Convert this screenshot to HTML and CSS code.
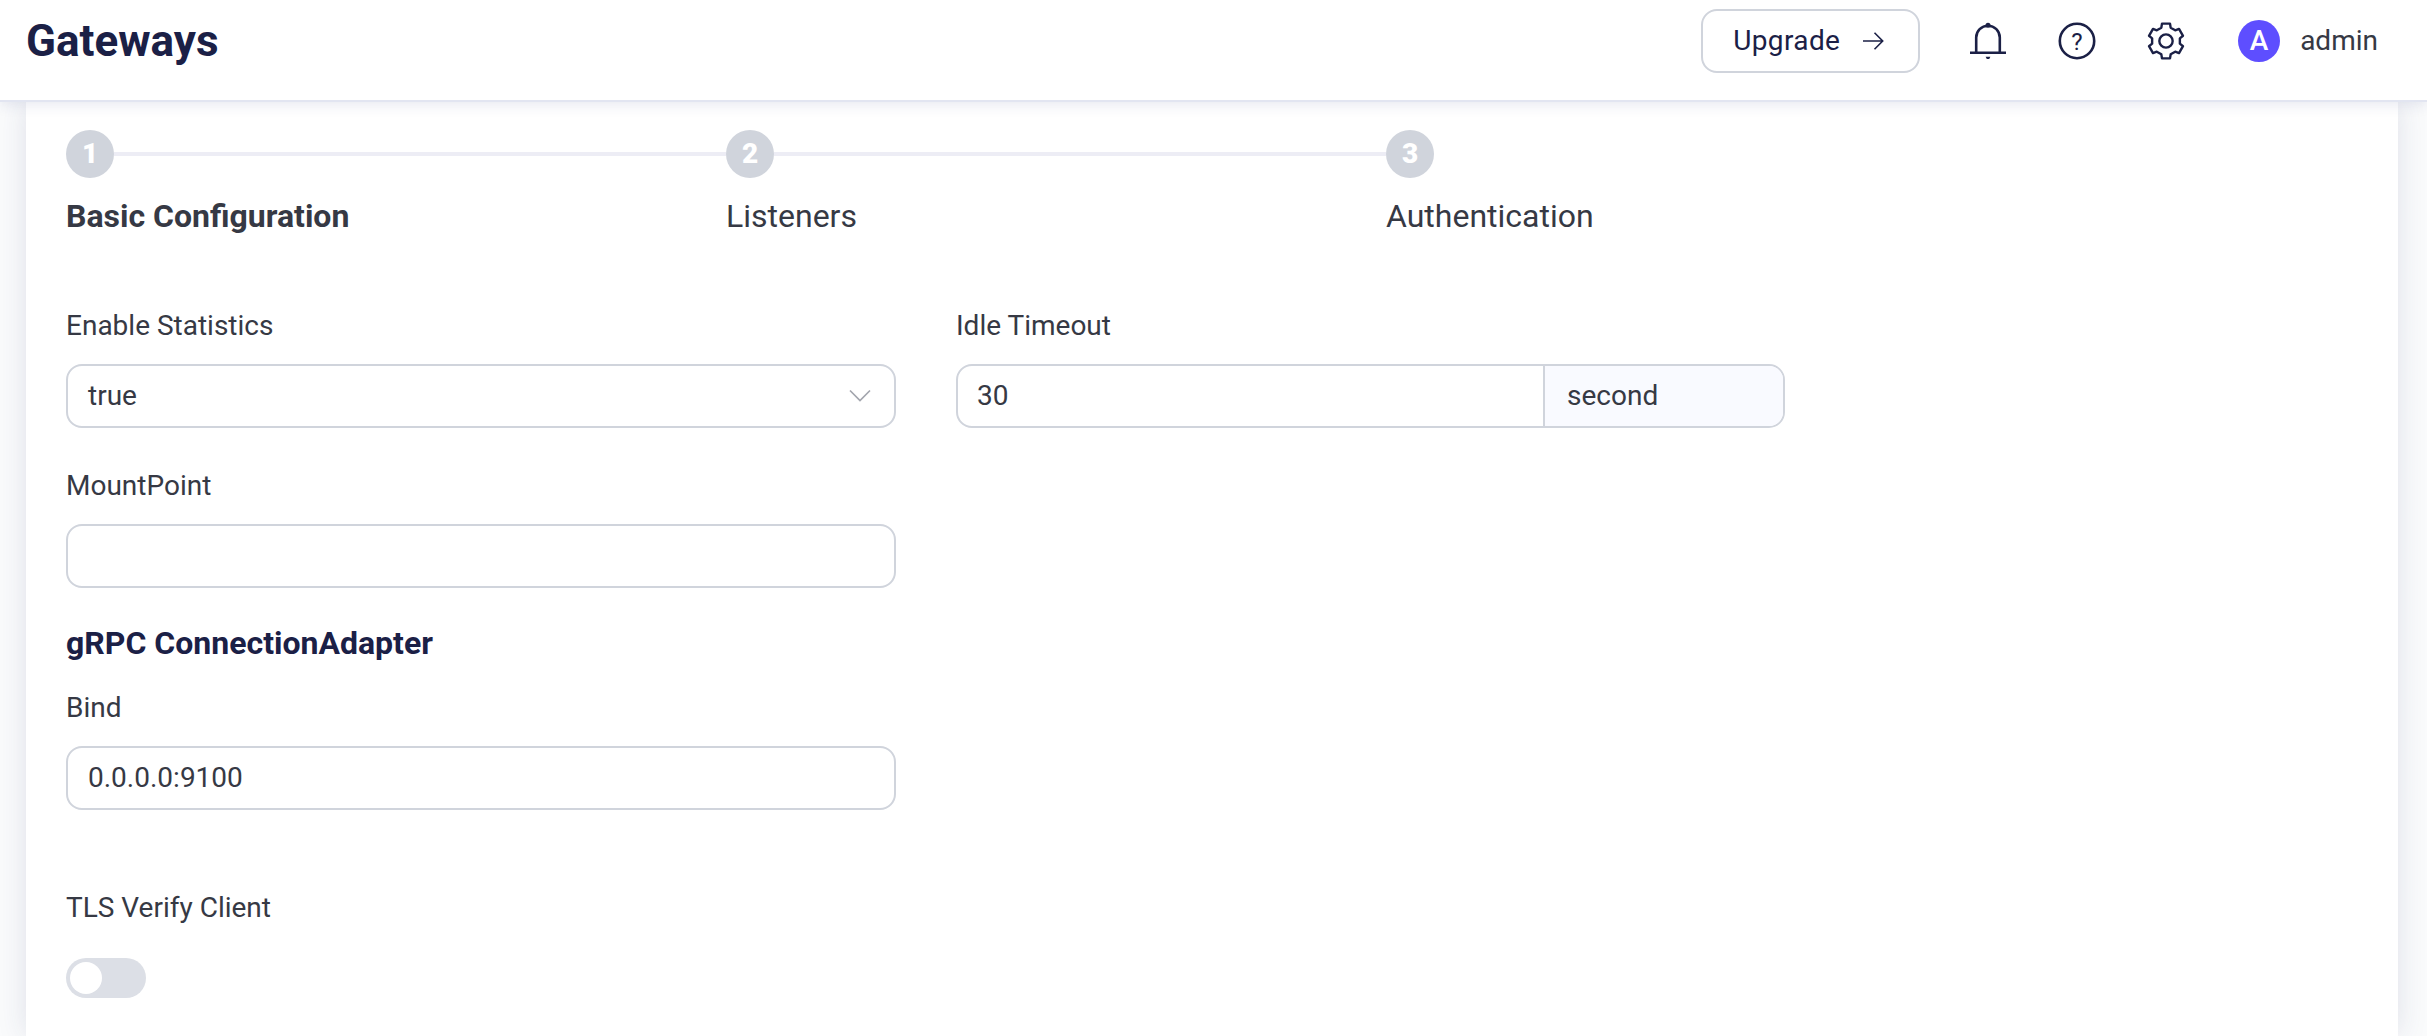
FILE: index.html
```html
<!DOCTYPE html>
<html lang="en">
<head>
<meta charset="utf-8">
<title>Gateways</title>
<link rel="stylesheet" href="styles.css">
</head>
<body>
<header class="topbar">
  <h1 class="page-title">Gateways</h1>
  <div class="actions">
    <button class="upgrade" type="button"><span>Upgrade</span>
      <svg class="arrow" viewBox="0 0 22 22"><path d="M1 11H20.5M12.5 2.8L20.7 11L12.5 19.2"/></svg>
    </button>
    <svg class="icon bell" viewBox="0 0 40 40"><path class="line" d="M8.2 31.7V16.5a11.8 11.8 0 0 1 23.6 0V31.7M2 31.7H38"/><circle cx="20" cy="4.2" r="2.5"/><path d="M17.6 35.7h4.8l-1.2 2.4h-2.4z"/></svg>
    <svg class="icon help" viewBox="0 0 40 40"><circle class="line" cx="20" cy="20" r="17.2"/><text x="20" y="28.6" text-anchor="middle">?</text></svg>
    <svg class="icon gear" viewBox="-60 -60 120 120"><path class="line" d="M-14 -40L-12 -52H12L14 -40L27.6 -32.1L39 -36.4L51 -15.6L41.6 -7.9V7.9L51 15.6L39 36.4L27.6 32.1L14 40L12 52H-12L-14 40L-27.6 32.1L-39 36.4L-51 15.6L-41.6 7.9V-7.9L-51 -15.6L-39 -36.4L-27.6 -32.1Z"/><circle class="line" r="20"/></svg>
    <div class="user"><span class="avatar">A</span><span class="username">admin</span></div>
  </div>
</header>
<main class="page">
  <section class="card">
    <ol class="steps">
      <li class="step active"><div class="step-head"><span class="step-num">1</span></div><div class="step-title">Basic Configuration</div></li>
      <li class="step"><div class="step-head"><span class="step-num">2</span></div><div class="step-title">Listeners</div></li>
      <li class="step last"><div class="step-head"><span class="step-num">3</span></div><div class="step-title">Authentication</div></li>
    </ol>
    <form class="form">
      <div class="field">
        <label class="label">Enable Statistics</label>
        <div class="control select"><span>true</span><svg class="chevron" viewBox="0 0 22 14"><path d="M1 1.5L11 11.5L21 1.5"/></svg></div>
      </div>
      <div class="field">
        <label class="label">Idle Timeout</label>
        <div class="control group"><span class="value">30</span><span class="unit">second</span></div>
      </div>
      <div class="field">
        <label class="label">MountPoint</label>
        <div class="control"></div>
      </div>
      <h2 class="section-title">gRPC ConnectionAdapter</h2>
      <div class="field">
        <label class="label">Bind</label>
        <div class="control">0.0.0.0:9100</div>
      </div>
      <div class="field tls">
        <label class="label">TLS Verify Client</label>
        <div class="switch"><span class="knob"></span></div>
      </div>
    </form>
  </section>
</main>
</body>
</html>
```
FILE: styles.css
```css
* { box-sizing: border-box; }
html, body { height: 100%; }
body {
  margin: 0;
  display: flex;
  flex-direction: column;
  overflow: hidden;
  background: #fafbfc;
  color: #363944;
  font: 28px/44px Roboto, sans-serif;
}
h1, h2, ol { margin: 0; padding: 0; }

.topbar {
  position: relative;
  z-index: 1;
  flex: none;
  height: 102px;
  padding: 0 49px 18px 26px;
  display: flex;
  align-items: center;
  justify-content: space-between;
  background: #fff;
  border-bottom: 2px solid #e2e5f1;
  box-shadow: 0 2px 14px rgba(40, 50, 120, 0.12);
}
.page-title { font-size: 44px; line-height: 52px; font-weight: 700; color: #1b2046; }
.actions { display: flex; align-items: center; color: #1b2046; }
.upgrade {
  width: 219px;
  height: 64px;
  margin-right: 48px;
  padding: 0 34px 0 30px;
  display: flex;
  align-items: center;
  justify-content: space-between;
  background: #fff;
  border: 2px solid #d0d4dc;
  border-radius: 16px;
  color: #1b2046;
  font: 28px/44px Roboto, sans-serif;
  letter-spacing: 0.4px;
}
.arrow { width: 22px; height: 22px; fill: none; stroke: #1b2046; stroke-width: 1.6; }
.icon { width: 40px; height: 40px; flex: none; fill: #1b2046; }
.icon .line { fill: none; stroke: #1b2046; stroke-width: 2.6; }
.gear .line { stroke-width: 7.2; stroke-linejoin: round; }
.bell, .help { margin-right: 49px; }
.help text { font-size: 24px; }
.user { display: flex; align-items: center; margin-left: 52px; color: #363944; }
.avatar {
  width: 42px;
  height: 42px;
  margin-right: 20px;
  border-radius: 50%;
  background: #5e4eff;
  color: #fff;
  font-weight: 500;
  line-height: 42px;
  text-align: center;
}

.page { flex: 1; min-height: 0; padding: 0 29px 0 26px; }
.card {
  height: 100%;
  padding: 28px 40px 0;
  background: #fff;
  box-shadow: 0 0 28px rgba(40, 50, 100, 0.13);
}

.steps { display: flex; list-style: none; }
.step { width: 660px; }
.step-head { display: flex; align-items: center; height: 48px; }
.step-head::after { content: ""; flex: 1; height: 4px; background: #ededf5; }
.last .step-head::after { display: none; }
.step-num {
  width: 48px;
  height: 48px;
  border-radius: 50%;
  background: #d0d4dc;
  color: #fff;
  font-weight: 900;
  line-height: 48px;
  text-align: center;
}
.step-title { margin-top: 16px; font-size: 32px; line-height: 44px; }
.active .step-title { font-weight: 700; }

.form {
  display: grid;
  grid-template-columns: 830px 829px;
  column-gap: 60px;
  margin-top: 66px;
}
.field { margin-bottom: 36px; }
.label { display: block; margin-bottom: 16px; }
.control {
  height: 64px;
  padding: 0 20px;
  border: 2px solid #d0d4dc;
  border-radius: 16px;
  line-height: 60px;
}
.select { display: flex; align-items: center; justify-content: space-between; padding-right: 23px; }
.chevron { width: 22px; height: 14px; fill: none; stroke: #a3a6ae; stroke-width: 1.7; }
.group { display: flex; padding: 0; overflow: hidden; }
.value { flex: 1; padding-left: 19px; }
.unit { width: 240px; padding-left: 22px; border-left: 2px solid #d0d4dc; background: #f9faff; }
.section-title {
  grid-column: 1 / -1;
  margin: -1px 0 23px;
  font-size: 32px;
  line-height: 40px;
  font-weight: 700;
  color: #1b2046;
}
.section-title + .field, .tls { grid-column: 1 / -1; width: 830px; }
.tls { margin: 40px 0 0; }
.switch { width: 80px; height: 40px; margin-top: 28px; padding: 4px; border-radius: 20px; background: #dcdfe6; }
.knob { display: block; width: 32px; height: 32px; border-radius: 50%; background: #fff; }
```
